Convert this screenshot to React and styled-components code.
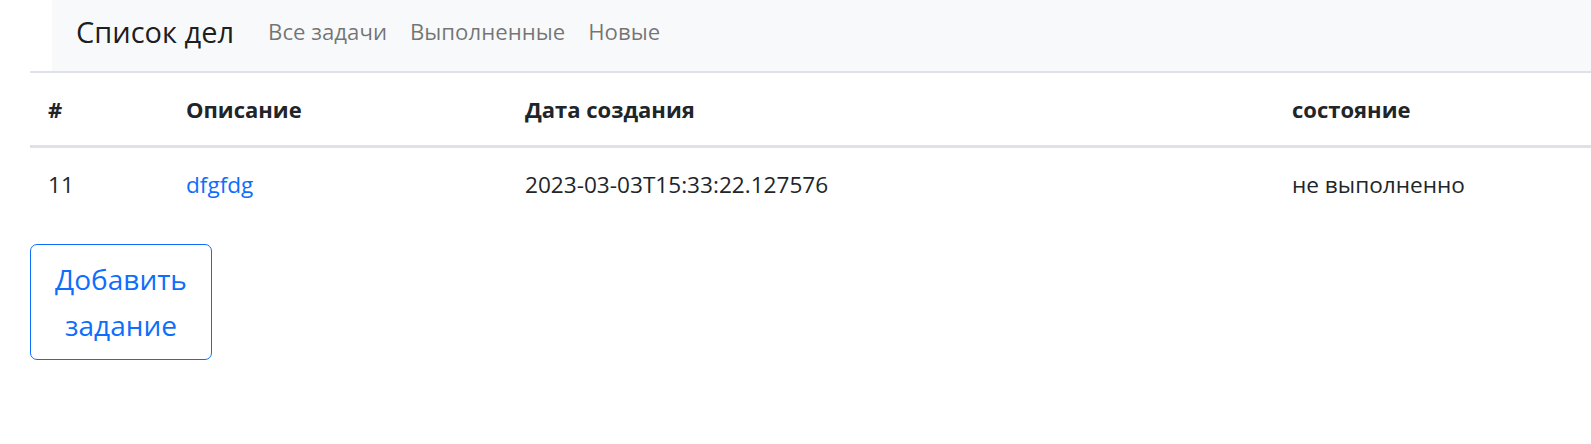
import React from "react";
import styled, { createGlobalStyle } from "styled-components";

const Global = createGlobalStyle`
  html, body { margin: 0; padding: 0; background: #fff; }
  body {
    font-family: "Open Sans", "Noto Sans", sans-serif;
    color: #212529;
    -webkit-font-smoothing: antialiased;
  }
  * { box-sizing: border-box; }
`;

const Page = styled.div`
  padding-left: 30px;
  overflow: hidden;
`;

const Navbar = styled.nav`
  margin-left: 22px;
  height: 71px;
  background: #f8f9fa;
  display: flex;
  align-items: center;
  padding: 0 0 8px 24px;
`;

const Brand = styled.a`
  font-size: 29px;
  color: rgba(0, 0, 0, 0.9);
  text-decoration: none;
  margin-right: 34px;
  white-space: nowrap;
`;

const NavLinks = styled.div`
  display: flex;
  gap: 23px;
`;

const NavLink = styled.a`
  font-size: 22.2px;
  color: rgba(0, 0, 0, 0.55);
  text-decoration: none;
  white-space: nowrap;
`;

const Table = styled.table`
  width: 100%;
  border-collapse: collapse;
  table-layout: fixed;
  margin-bottom: 23px;
`;

const HeadRow = styled.tr`
  border-top: 2px solid #dee2e6;
  border-bottom: 3px solid #dee2e6;
`;

const Th = styled.th`
  text-align: left;
  font-weight: 700;
  font-size: 22px;
  line-height: 30px;
  padding: 21px 18px 21px 18px;
  width: ${(p) => p.$w || "auto"};
`;

const Td = styled.td`
  font-size: 22.6px;
  line-height: 30px;
  padding: 22px 18px 21px 18px;
`;

const Link = styled.a`
  color: #0d6efd;
  text-decoration: none;
`;

const AddButton = styled.button`
  width: 182px;
  height: 116px;
  border: 1px solid #0d6efd;
  border-radius: 7px;
  background: #fff;
  color: #0d6efd;
  font-family: inherit;
  font-size: 28px;
  line-height: 46px;
  padding: 11px 20px;
  text-align: center;
  cursor: pointer;
`;

export default function App() {
  return (
    <Page>
      <Global />
      <Navbar>
        <Brand href="#">Список дел</Brand>
        <NavLinks>
          <NavLink href="#">Все задачи</NavLink>
          <NavLink href="#">Выполненные</NavLink>
          <NavLink href="#">Новые</NavLink>
        </NavLinks>
      </Navbar>
      <Table>
        <thead>
          <HeadRow>
            <Th $w="138px">#</Th>
            <Th $w="339px">Описание</Th>
            <Th $w="767px">Дата создания</Th>
            <Th>состояние</Th>
          </HeadRow>
        </thead>
        <tbody>
          <tr>
            <Td>11</Td>
            <Td>
              <Link href="#">dfgfdg</Link>
            </Td>
            <Td>2023-03-03T15:33:22.127576</Td>
            <Td>не выполненно</Td>
          </tr>
        </tbody>
      </Table>
      <AddButton>Добавить задание</AddButton>
    </Page>
  );
}
